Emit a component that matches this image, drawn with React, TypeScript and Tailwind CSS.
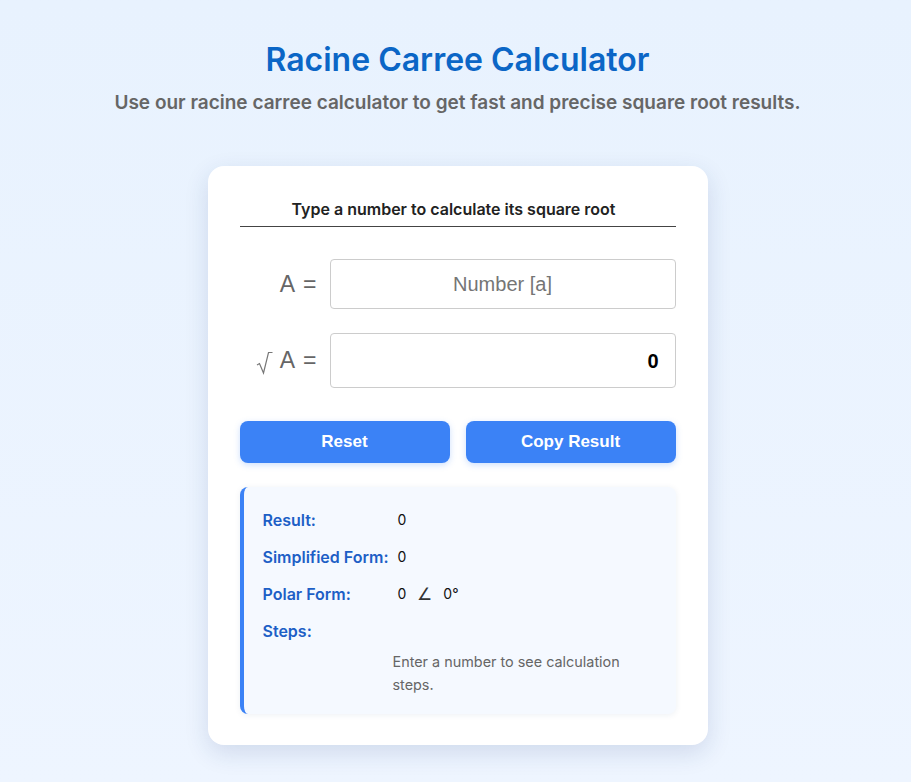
import { useState } from "react";

function ResultRow({ label, children }: { label: string; children?: React.ReactNode }) {
  return (
    <div className="flex items-center h-[37px]">
      <div className="w-[135px] shrink-0 text-[16px] font-semibold text-[#1d5fc6] font-[Inter,sans-serif]">
        {label}
      </div>
      <div className="flex items-center text-[14px] text-[#111] font-[Inter,sans-serif]">{children}</div>
    </div>
  );
}

export default function App() {
  const [value, setValue] = useState("");

  const num = parseFloat(value);
  const root = !isNaN(num) && num >= 0 ? Math.sqrt(num) : 0;
  const shown = Number.isInteger(root) ? String(root) : root.toFixed(6);

  return (
    <div className="min-h-screen w-full bg-gradient-to-b from-[#e8f2fe] to-[#eef5ff] flex flex-col items-center pl-[4px] pt-[38px] pb-[38px] font-[Inter,sans-serif]">
      <h1 className="text-[32px] leading-[44px] font-semibold text-[#0b66c6]">Racine Carree Calculator</h1>
      <p className="mt-[9px] text-[19px] leading-[24px] font-semibold text-[#666]">
        Use our racine carree calculator to get fast and precise square root results.
      </p>

      <div className="mt-[51px] w-[500px] bg-white rounded-[16px] shadow-[0_8px_24px_rgba(30,60,120,0.14)] px-8 pt-[32px] pb-[31px]">
        <div className="text-center text-[16px] leading-[22px] font-semibold text-[#222] pr-[8px] pb-[6px] border-b border-[#444]">
          Type a number to calculate its square root
        </div>

        <div className="mt-[32px] flex items-center font-['Liberation_Sans',Arial,sans-serif]">
          <div className="w-[90px] pr-[13px] flex justify-end text-[23px] text-[#666]">
            <span>A</span>
            <span className="ml-[8px]">=</span>
          </div>
          <input
            value={value}
            onChange={(e) => setValue(e.target.value)}
            placeholder="Number [a]"
            className="flex-1 min-w-0 h-[50px] border border-[#ccc] rounded-[4px] text-center text-[20px] text-[#333] placeholder:text-[#757575] outline-none"
          />
        </div>

        <div className="mt-[24px] flex items-center font-['Liberation_Sans',Arial,sans-serif]">
          <div className="w-[90px] pr-[13px] flex items-center justify-end text-[23px] text-[#666]">
            <svg width="17" height="24" viewBox="0 0 17 24" className="mr-[7px] mt-[4px]">
              <path d="M1 14 L3.5 12.5 L7.5 22 L12.5 1.5 L16.5 1.5" fill="none" stroke="#777" strokeWidth="1.2" />
            </svg>
            <span>A</span>
            <span className="ml-[8px]">=</span>
          </div>
          <div className="flex-1 h-[55px] border border-[#ccc] rounded-[4px] flex items-center justify-end pr-[16px] text-[20px] font-bold text-black">
            {shown}
          </div>
        </div>

        <div className="mt-[33px] grid grid-cols-2 gap-4 font-['Liberation_Sans',Arial,sans-serif]">
          <button
            onClick={() => setValue("")}
            className="h-[42px] rounded-[8px] bg-[#3b82f6] text-white text-[17px] font-bold shadow-[0_2px_6px_rgba(59,130,246,0.25)]"
          >
            Reset
          </button>
          <button className="h-[42px] rounded-[8px] bg-[#3b82f6] text-white text-[17px] font-bold shadow-[0_2px_6px_rgba(59,130,246,0.25)]">
            Copy Result
          </button>
        </div>

        <div className="mt-[24px] bg-[#f5f9ff] border-l-4 border-[#3b82f6] rounded-[8px] shadow-[0_1px_6px_rgba(30,60,120,0.08)] pl-[19px] pr-[20px] pt-[14px] pb-[18px]">
          <ResultRow label="Result:">{shown}</ResultRow>
          <ResultRow label="Simplified Form:">{shown}</ResultRow>
          <ResultRow label="Polar Form:">
            <span>{shown}</span>
            <span className="mx-[11px] text-[17px] leading-[20px] font-light text-[#333]">∠</span>
            <span>0°</span>
          </ResultRow>
          <ResultRow label="Steps:" />
          <div className="ml-[130px] mt-[1px] w-[250px] text-[14.4px] leading-[23px] text-[#666]">
            Enter a number to see calculation steps.
          </div>
        </div>
      </div>
    </div>
  );
}
